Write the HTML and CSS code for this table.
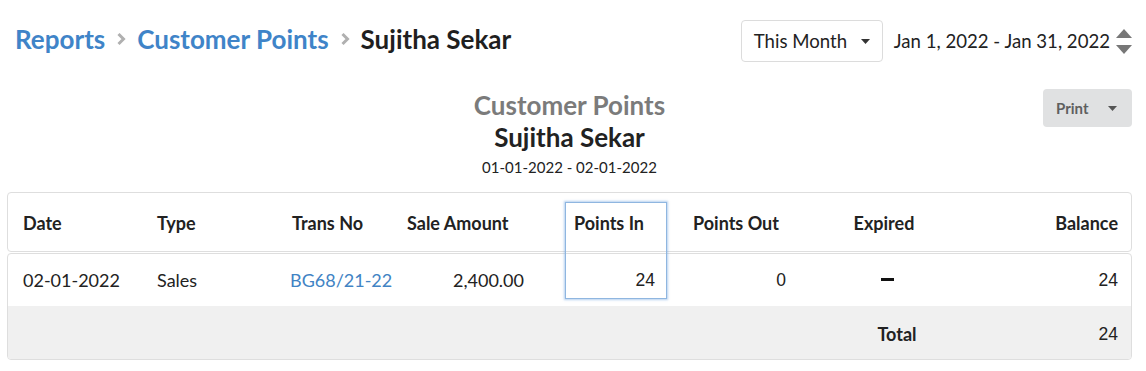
FILE: index.html
```html
<!DOCTYPE html>
<html>
<head>
<meta charset="utf-8">
<link rel="stylesheet" href="styles.css">
</head>
<body>
<div class="page">
  <div class="topbar">
    <div class="crumbs">
      <a class="crumb-link">Reports</a>
      <svg class="chev" width="10" height="14" viewBox="0 0 10 14"><path d="M2.5 2 L7.5 7 L2.5 12" fill="none" stroke="#b0b0b0" stroke-width="3"/></svg>
      <a class="crumb-link">Customer Points</a>
      <svg class="chev" width="10" height="14" viewBox="0 0 10 14"><path d="M2.5 2 L7.5 7 L2.5 12" fill="none" stroke="#b0b0b0" stroke-width="3"/></svg>
      <span class="crumb-current">Sujitha Sekar</span>
    </div>
    <div class="range">
      <div class="dropdown">
        <span>This Month</span>
        <svg width="9" height="5" viewBox="0 0 9 5"><path d="M0 0 H9 L4.5 5 Z" fill="#333"/></svg>
      </div>
      <span class="range-text">Jan 1, 2022 - Jan 31, 2022</span>
      <div class="steppers">
        <svg width="16" height="10" viewBox="0 0 16 10"><path d="M0 10 L8 1 L16 10 Z" fill="#777"/></svg>
        <svg width="16" height="10" viewBox="0 0 16 10"><path d="M0 0 L16 0 L8 9 Z" fill="#777"/></svg>
      </div>
    </div>
  </div>

  <div class="report-head">
    <div></div>
    <div class="titles">
      <div class="title-main">Customer Points</div>
      <div class="title-name">Sujitha Sekar</div>
      <div class="title-dates">01-01-2022 - 02-01-2022</div>
    </div>
    <div class="print-wrap">
      <div class="print-btn">
        <span>Print</span>
        <svg width="9" height="5" viewBox="0 0 9 5"><path d="M0 0 H9 L4.5 5 Z" fill="#555"/></svg>
      </div>
    </div>
  </div>

  <div class="table">
    <div class="thead row">
      <div class="c c-date">Date</div>
      <div class="c c-type">Type</div>
      <div class="c c-trans">Trans No</div>
      <div class="c c-sale">Sale Amount</div>
      <div class="c c-in">Points In</div>
      <div class="c c-out">Points Out</div>
      <div class="c c-exp">Expired</div>
      <div class="c c-bal">Balance</div>
    </div>
    <div class="tbody">
      <div class="row body-row">
        <div class="c c-date">02-01-2022</div>
        <div class="c c-type">Sales</div>
        <div class="c c-trans"><a class="trans-link">BG68/21-22</a></div>
        <div class="c c-sale num-r">2,400.00</div>
        <div class="c c-in num num-r">24</div>
        <div class="c c-out num num-r">0</div>
        <div class="c c-exp c-dash"><span class="dash"></span></div>
        <div class="c c-bal num">24</div>
      </div>
      <div class="row foot-row">
        <div class="c"></div>
        <div class="c"></div>
        <div class="c"></div>
        <div class="c"></div>
        <div class="c"></div>
        <div class="c"></div>
        <div class="c c-exp total">Total</div>
        <div class="c c-bal num">24</div>
      </div>
    </div>
    <div class="focus-box"></div>
  </div>
</div>
</body>
</html>
```

FILE: styles.css
```css
* { box-sizing: border-box; }
html, body { margin: 0; padding: 0; background: #fff; }
body {
  font-family: Lato, "Noto Sans", sans-serif;
  color: #222;
}
.page {
  padding: 0 14px 0 7px;
}
.topbar {
  display: flex;
  justify-content: space-between;
  align-items: center;
  padding-top: 20px;
}
.crumbs {
  display: flex;
  align-items: center;
  gap: 11px;
  margin-left: 8px;
  margin-top: -4px;
  font-size: 26px;
  line-height: 34px;
}
.crumb-link {
  color: #3f84c8;
  font-weight: 700;
}
.crumb-current {
  color: #1f1f1f;
  font-weight: 700;
}
.chev { display: block; }

.range {
  display: flex;
  align-items: center;
}
.dropdown {
  height: 42px;
  width: 142px;
  border: 1px solid #dcdcdc;
  border-radius: 4px;
  display: flex;
  align-items: center;
  justify-content: space-between;
  padding: 0 12px 0 12px;
  font-size: 18.6px;
  color: #222;
}
.range-text {
  margin-left: 11px;
  font-size: 18.6px;
  color: #222;
}
.steppers {
  display: flex;
  flex-direction: column;
  gap: 7px;
  margin-left: 6px;
}
.steppers svg { display: block; }

.report-head {
  display: grid;
  grid-template-columns: 1fr auto 1fr;
  margin-top: 27px;
}
.titles {
  text-align: center;
}
.title-main {
  font-size: 26px;
  line-height: 32px;
  font-weight: 700;
  color: #7b7b7b;
}
.title-name {
  font-size: 26px;
  line-height: 32px;
  font-weight: 700;
  color: #222;
}
.title-dates {
  font-size: 15px;
  line-height: 20px;
  margin-top: 4px;
  color: #222;
}
.print-wrap {
  display: flex;
  justify-content: flex-end;
  align-items: flex-start;
}
.print-btn {
  width: 89px;
  height: 38px;
  background: #e0e1e2;
  border-radius: 4px;
  display: flex;
  align-items: center;
  justify-content: space-between;
  padding: 0 15px 0 13px;
  font-size: 15px;
  font-weight: 700;
  color: #5f5f5f;
}

.table {
  position: relative;
  margin-top: 15px;
}
.row {
  display: grid;
  grid-template-columns: 138px 135px 116px 167px 101px 134px 170px 1fr;
  align-items: center;
}
.thead {
  height: 60px;
  border: 1px solid #dedede;
  border-radius: 4px;
  font-size: 18px;
  font-weight: 700;
  color: #222;
  padding-top: 1px;
}
.tbody {
  margin-top: 1px;
  border: 1px solid #dedede;
  border-radius: 4px;
  overflow: hidden;
  font-size: 18px;
  color: #222;
}
.body-row { height: 52px; }
.foot-row { height: 53px; background: #f0f0f0; padding-top: 3px; }
.c { padding-left: 10px; white-space: nowrap; }
.c-date { padding-left: 15px; }
.c-type { padding-left: 11px; }
.c-trans { padding-left: 9px; }
.thead .c-trans { padding-left: 11px; }
.c-sale { padding-left: 10px; }
.c-sale.num-r { text-align: right; padding-right: 40px; }
.c-in.num-r { text-align: right; padding-right: 10px; }
.c-out { padding-left: 28px; }
.c-out.num-r { text-align: right; padding-right: 13px; }
.c-exp { text-align: center; padding-left: 0; }
.c-dash {
  display: flex;
  justify-content: center;
  padding-left: 6px;
  padding-bottom: 2px;
}
.c-bal { text-align: right; padding-right: 13px; }
.num {
  font-family: "Liberation Sans", Arial, sans-serif;
  font-size: 17.5px;
  color: #222;
}
.trans-link { color: #4183c4; }
.dash {
  display: block;
  width: 13px;
  height: 3px;
  background: #111;
}
.total {
  font-weight: 700;
  padding-left: 26px;
}
.focus-box {
  position: absolute;
  left: 558px;
  top: 10px;
  width: 102px;
  height: 97px;
  border: 1px solid #8fb6e0;
  box-shadow: 0 0 2px 1px rgba(120, 170, 225, 0.55);
  pointer-events: none;
}
```
